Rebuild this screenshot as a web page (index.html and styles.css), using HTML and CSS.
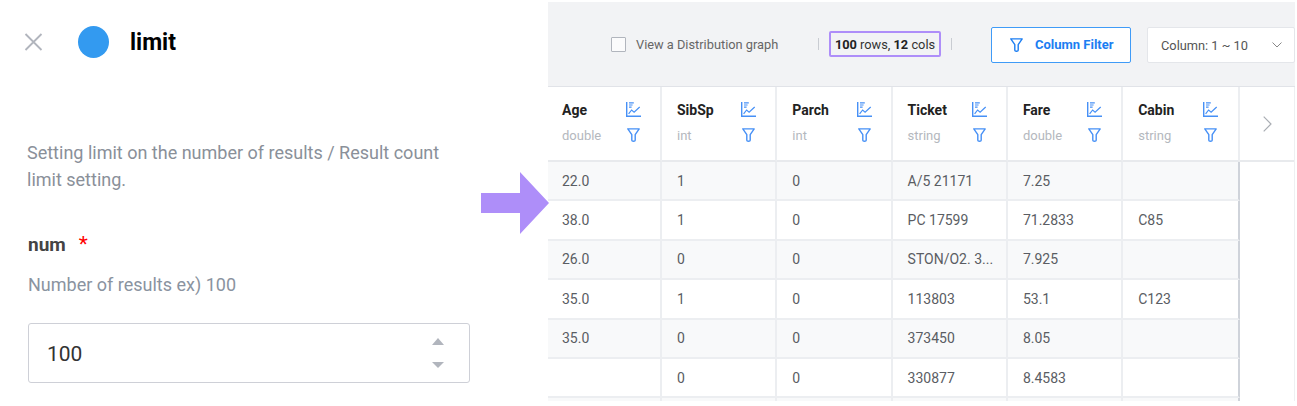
FILE: index.html
```html
<!DOCTYPE html>
<html lang="en">
<head>
<meta charset="utf-8">
<title>limit</title>
<link rel="stylesheet" href="styles.css">
</head>
<body>
<svg class="defs" width="0" height="0" aria-hidden="true">
  <symbol id="chart" viewBox="0 0 15 15">
    <path d="M.7 0v14.2H15" fill="none" stroke="currentColor" stroke-width="1.4"/>
    <path d="M3 .8h4.8M3 3h3.6M3 5.2h2.6" fill="none" stroke="currentColor" stroke-width="1.2"/>
    <path d="M2.6 11.8l3-3.8 2.5 2.2 5.6-5.2" fill="none" stroke="currentColor" stroke-width="1.2"/>
  </symbol>
  <symbol id="funnel" viewBox="0 0 13 14">
    <path d="M.8.9h11.4L8.2 6.6v5.7c0 .8-.6 1-1.7 1-1.1 0-1.7-.2-1.7-1V6.6z" fill="none" stroke="currentColor" stroke-width="1.4" stroke-linejoin="round"/>
  </symbol>
</svg>
<main class="page">
  <section class="panel">
    <header class="head">
      <svg class="close" viewBox="0 0 18 18"><path d="M1 1l16 16M17 1L1 17" stroke="currentColor" stroke-width="1.8" fill="none"/></svg>
      <span class="dot"></span>
      <h1 class="title">limit</h1>
    </header>
    <p class="desc">Setting limit on the number of results / Result count limit setting.</p>
    <div class="label"><b>num</b><span class="req">*</span></div>
    <p class="hint">Number of results ex) 100</p>
    <div class="input">
      <span class="value">100</span>
      <span class="spin"><i class="up"></i><i class="down"></i></span>
    </div>
  </section>

  <section class="data">
    <div class="toolbar">
      <span class="check"></span>
      <span class="check-label">View a Distribution graph</span>
      <span class="sep first"></span>
      <span class="count"><b>100</b> rows, <b>12</b> cols</span>
      <span class="sep"></span>
      <button class="btn"><svg class="btn-icon"><use href="#funnel"/></svg>Column Filter</button>
      <div class="select"><span>Column: 1 ~ 10</span><svg class="caret" viewBox="0 0 10 6"><path d="M.5.5L5 5 9.5.5" fill="none" stroke="currentColor"/></svg></div>
    </div>
    <div class="body">
      <div class="table">
        <div class="th"><div><b>Age</b><span>double</span></div><div class="ic"><svg class="i-c"><use href="#chart"/></svg><svg class="i-f"><use href="#funnel"/></svg></div></div>
        <div class="th"><div><b>SibSp</b><span>int</span></div><div class="ic"><svg class="i-c"><use href="#chart"/></svg><svg class="i-f"><use href="#funnel"/></svg></div></div>
        <div class="th"><div><b>Parch</b><span>int</span></div><div class="ic"><svg class="i-c"><use href="#chart"/></svg><svg class="i-f"><use href="#funnel"/></svg></div></div>
        <div class="th"><div><b>Ticket</b><span>string</span></div><div class="ic"><svg class="i-c"><use href="#chart"/></svg><svg class="i-f"><use href="#funnel"/></svg></div></div>
        <div class="th"><div><b>Fare</b><span>double</span></div><div class="ic"><svg class="i-c"><use href="#chart"/></svg><svg class="i-f"><use href="#funnel"/></svg></div></div>
        <div class="th"><div><b>Cabin</b><span>string</span></div><div class="ic"><svg class="i-c"><use href="#chart"/></svg><svg class="i-f"><use href="#funnel"/></svg></div></div>

        <div class="td odd">22.0</div><div class="td odd">1</div><div class="td odd">0</div><div class="td odd">A/5 21171</div><div class="td odd">7.25</div><div class="td odd"></div>
        <div class="td">38.0</div><div class="td">1</div><div class="td">0</div><div class="td">PC 17599</div><div class="td">71.2833</div><div class="td">C85</div>
        <div class="td odd">26.0</div><div class="td odd">0</div><div class="td odd">0</div><div class="td odd">STON/O2. 3...</div><div class="td odd">7.925</div><div class="td odd"></div>
        <div class="td">35.0</div><div class="td">1</div><div class="td">0</div><div class="td">113803</div><div class="td">53.1</div><div class="td">C123</div>
        <div class="td odd">35.0</div><div class="td odd">0</div><div class="td odd">0</div><div class="td odd">373450</div><div class="td odd">8.05</div><div class="td odd"></div>
        <div class="td"></div><div class="td">0</div><div class="td">0</div><div class="td">330877</div><div class="td">8.4583</div><div class="td"></div>
        <div class="td odd"></div><div class="td odd"></div><div class="td odd"></div><div class="td odd"></div><div class="td odd"></div><div class="td odd"></div>
      </div>
      <div class="side">
        <div class="next"><svg class="chev" viewBox="0 0 9 16"><path d="M.7.7L8 8 .7 15.3" fill="none" stroke="currentColor" stroke-width="1.2"/></svg></div>
      </div>
    </div>
  </section>

  <svg class="arrow" viewBox="0 0 68 62"><path d="M0 21h39V0l29 31-29 31V41H0z" fill="currentColor"/></svg>
</main>
</body>
</html>
```
FILE: styles.css
```css
* { box-sizing: border-box; }
html, body { margin: 0; height: 100%; overflow: hidden; background: #fff; }
body { font-family: Roboto, "Liberation Sans", sans-serif; }
.defs { position: absolute; }
.page { position: relative; display: flex; width: 1297px; height: 406px; }

.panel { width: 548px; flex: none; padding: 26px 0 0 28px; }
.head { display: flex; align-items: center; height: 32px; }
.close { width: 19px; height: 18px; margin-left: -4px; color: #b1b5bd; flex: none; }
.dot { width: 31px; height: 32px; border-radius: 50%; background: #339af0; margin-left: 35px; flex: none; }
.title { margin: 1px 0 0 21px; font-size: 23px; font-weight: 700; color: #000; line-height: 28px; }
.desc { width: 430px; margin: 81px 0 0 -1px; font-size: 18px; line-height: 27px; color: #8a9099; }
.label { display: flex; margin-top: 39px; height: 24px; align-items: center; font-size: 19px; color: #444; }
.label b { font-weight: 700; }
.req { color: #f00; margin-left: 13px; font-size: 21px; line-height: 24px; }
.hint { margin: 17px 0 0; font-size: 18px; line-height: 24px; color: #8a93a0; }
.input { display: flex; justify-content: space-between; align-items: center; width: 442px; height: 60px; margin: 26px 0 0; padding: 0 25px 0 18px; border: 1px solid #ced0d7; border-radius: 3px; font-size: 21px; color: #333; }
.value { margin-top: 2px; }
.spin { display: flex; flex-direction: column; gap: 17px; }
.spin i { display: block; border-left: 6px solid transparent; border-right: 6px solid transparent; }
.spin .up { border-bottom: 7px solid #b1b5bd; }
.spin .down { border-top: 6px solid #b1b5bd; }

.data { width: 747px; height: 399px; flex: none; margin-top: 2px; display: flex; flex-direction: column; }
.toolbar { display: flex; align-items: center; flex: none; height: 85px; padding: 0 0 0 63px; background: #f2f3f5; border-bottom: 1px solid #e1e3e8; font-size: 13px; color: #666; white-space: nowrap; }
.check { width: 15px; height: 15px; flex: none; border: 1px solid #b1b5bd; border-radius: 1px; background: #fbfbfc; }
.check-label { flex: none; width: 142px; margin-left: 10px; font-size: 12.8px; color: #666; }
.sep { flex: none; width: 1px; height: 12px; background: #c9ccd2; }
.sep.first { margin-left: 40px; }
.count { flex: none; margin: 0 10px; height: 26px; width: 112px; border: 2px solid #ae8ef9; border-radius: 2px; display: flex; align-items: center; justify-content: center; white-space: pre; color: #333; font-size: 12.8px; }
.count b { color: #222; font-weight: 700; }
.btn { flex: none; display: flex; align-items: center; width: 140px; height: 36px; margin: 2px 0 0 39px; padding: 0 0 2px 18px; border: 1px solid #3f9bf7; border-radius: 2px; background: #fff; color: #1c7ef2; font: 700 13px Roboto, sans-serif; }
.btn-icon { width: 13px; height: 14px; margin: 2px 12px 0 0; }
.select { flex: none; display: flex; align-items: center; justify-content: space-between; width: 148px; height: 36px; margin: 2px 0 0 16px; padding: 0 12px 0 13px; background: #fff; border: 1px solid #e4e6ea; border-radius: 2px; color: #555; font-size: 12.8px; }
.caret { width: 10px; height: 6px; color: #888; }

.body { display: flex; flex: 1; min-height: 0; overflow: hidden; }
.table { display: grid; grid-template-columns: 114px 115.3px 115.3px 115.3px 115.3px 117.1px; grid-template-rows: 75px repeat(6, 39.4px) 20px; flex: none; }
.th { display: flex; justify-content: space-between; padding: 14px 19px 0 15px; border-right: 2px solid #eceef1; border-bottom: 2px solid #e8eaed; background: #fff; }
.th:first-child { padding-left: 14px; }
.th:nth-child(6) { padding-right: 20px; }
.th b { display: block; font-size: 14px; line-height: 18px; color: #222; }
.th span { display: block; margin-top: 8px; font-size: 13px; line-height: 18px; color: #b4b8be; }
.ic { display: flex; flex-direction: column; align-items: center; color: #4690f6; }
.i-c { width: 15px; height: 15px; margin-top: 1px; }
.i-f { width: 13px; height: 14px; margin-top: 11px; }
.td { display: flex; align-items: center; padding: 0 15px; border-right: 2px solid #eceef1; border-bottom: 2px solid #eceef1; font-size: 14px; color: #5a5d63; background: #fff; white-space: nowrap; }
.td:nth-child(6n+1) { padding-left: 14px; }
.td:nth-child(6n) { border-right-color: #cfd3da; }
.td.odd { background: #f8f9fa; }
.side { flex: 1; border-right: 1px solid #eef0f2; }
.next { height: 75px; display: flex; align-items: center; justify-content: center; border-bottom: 2px solid #e8eaed; padding-left: 1px; color: #a9adb3; }
.chev { width: 9px; height: 16px; }

.arrow { position: absolute; left: 481px; top: 172px; width: 68px; height: 62px; color: #ae8ef9; }
```
